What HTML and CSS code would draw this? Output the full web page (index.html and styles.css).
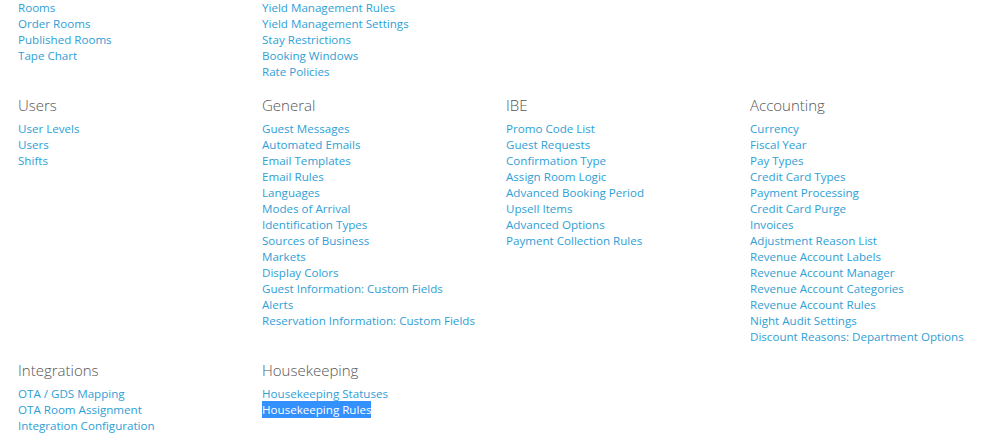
FILE: index.html
```html
<!DOCTYPE html>
<html>
<head>
<meta charset="utf-8">
<link rel="stylesheet" href="styles.css">
</head>
<body>
<div class="page">
  <section class="group">
    <div class="col">
      <ul class="links">
        <li><a>Rooms</a></li>
        <li><a>Order Rooms</a></li>
        <li><a>Published Rooms</a></li>
        <li><a>Tape Chart</a></li>
      </ul>
    </div>
    <div class="col">
      <ul class="links">
        <li><a>Yield Management Rules</a></li>
        <li><a>Yield Management Settings</a></li>
        <li><a>Stay Restrictions</a></li>
        <li><a>Booking Windows</a></li>
        <li><a>Rate Policies</a></li>
      </ul>
    </div>
  </section>

  <section class="group">
    <div class="col">
      <h3>Users</h3>
      <ul class="links">
        <li><a>User Levels</a></li>
        <li><a>Users</a></li>
        <li><a>Shifts</a></li>
      </ul>
    </div>
    <div class="col">
      <h3>General</h3>
      <ul class="links">
        <li><a>Guest Messages</a></li>
        <li><a>Automated Emails</a></li>
        <li><a>Email Templates</a></li>
        <li><a>Email Rules</a></li>
        <li><a>Languages</a></li>
        <li><a>Modes of Arrival</a></li>
        <li><a>Identification Types</a></li>
        <li><a>Sources of Business</a></li>
        <li><a>Markets</a></li>
        <li><a>Display Colors</a></li>
        <li><a>Guest Information: Custom Fields</a></li>
        <li><a>Alerts</a></li>
        <li><a>Reservation Information: Custom Fields</a></li>
      </ul>
    </div>
    <div class="col">
      <h3>IBE</h3>
      <ul class="links">
        <li><a>Promo Code List</a></li>
        <li><a>Guest Requests</a></li>
        <li><a>Confirmation Type</a></li>
        <li><a>Assign Room Logic</a></li>
        <li><a>Advanced Booking Period</a></li>
        <li><a>Upsell Items</a></li>
        <li><a>Advanced Options</a></li>
        <li><a>Payment Collection Rules</a></li>
      </ul>
    </div>
    <div class="col">
      <h3>Accounting</h3>
      <ul class="links">
        <li><a>Currency</a></li>
        <li><a>Fiscal Year</a></li>
        <li><a>Pay Types</a></li>
        <li><a>Credit Card Types</a></li>
        <li><a>Payment Processing</a></li>
        <li><a>Credit Card Purge</a></li>
        <li><a>Invoices</a></li>
        <li><a>Adjustment Reason List</a></li>
        <li><a>Revenue Account Labels</a></li>
        <li><a>Revenue Account Manager</a></li>
        <li><a>Revenue Account Categories</a></li>
        <li><a>Revenue Account Rules</a></li>
        <li><a>Night Audit Settings</a></li>
        <li><a>Discount Reasons: Department Options</a></li>
      </ul>
    </div>
  </section>

  <section class="group">
    <div class="col">
      <h3>Integrations</h3>
      <ul class="links">
        <li><a>OTA / GDS Mapping</a></li>
        <li><a>OTA Room Assignment</a></li>
        <li><a>Integration Configuration</a></li>
      </ul>
    </div>
    <div class="col">
      <h3>Housekeeping</h3>
      <ul class="links">
        <li><a>Housekeeping Statuses</a></li>
        <li><a class="selected">Housekeeping Rules</a></li>
      </ul>
    </div>
  </section>
</div>
</body>
</html>
```

FILE: styles.css
```css
html, body {
  margin: 0;
  padding: 0;
  background: #ffffff;
  overflow: hidden;
}

body {
  font-family: "Open Sans", "Liberation Sans", sans-serif;
}

.page {
  padding-left: 18px;
  display: flex;
  flex-direction: column;
  gap: 15px;
}

.group {
  display: grid;
  grid-template-columns: repeat(4, 244px);
}

.col h3 {
  margin: 0 0 6px 0;
  font-size: 15px;
  line-height: 20px;
  font-weight: 300;
  color: #555555;
}

.links {
  list-style: none;
  margin: 0;
  padding: 0;
}

.links li {
  font-size: 11.6px;
  line-height: 16px;
  height: 16px;
}

.links a {
  color: #2fa0d6;
  text-decoration: none;
  cursor: pointer;
}

.links a.selected {
  background: #3390ff;
  color: #ffffff;
  padding: 1px 0;
}
```
